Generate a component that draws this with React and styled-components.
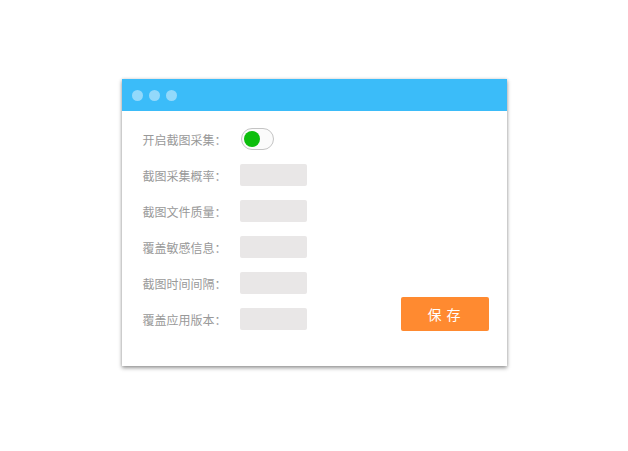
import React, { useState } from "react";
import styled, { createGlobalStyle } from "styled-components";

const GlobalStyle = createGlobalStyle`
  body {
    margin: 0;
    background: #fff;
    font-family: "Noto Sans CJK SC", "Noto Sans", sans-serif;
  }
`;

const Page = styled.div`
  padding: 79px 0 20px;
  display: flex;
  justify-content: center;
`;

const Window = styled.div`
  width: 385px;
  background: #fff;
  box-shadow: 0 2px 4px rgba(0, 0, 0, 0.4), 0 0 3px rgba(0, 0, 0, 0.12);
`;

const TitleBar = styled.div`
  height: 32px;
  background: #3bbcf9;
  display: flex;
  align-items: center;
  gap: 6px;
  padding-left: 10px;
`;

const Dot = styled.span`
  width: 11px;
  height: 11px;
  border-radius: 50%;
  background: #93d9fb;
`;

const Body = styled.div`
  display: flex;
  justify-content: space-between;
  align-items: flex-end;
  padding: 17px 18px 36px 21px;
`;

const Form = styled.div`
  display: flex;
  flex-direction: column;
  gap: 14px;
`;

const Row = styled.div`
  display: flex;
  align-items: center;
  height: 22px;
`;

const Label = styled.span`
  width: 97px;
  font-size: 12px;
  color: #999;
`;

const Field = styled.div`
  width: 67px;
  height: 22px;
  background: #e9e7e7;
  border-radius: 2px;
`;

const Toggle = styled.button`
  width: 33px;
  height: 22px;
  margin-left: 1px;
  padding: 0 2px;
  border: 1px solid #c4c4c4;
  border-radius: 11px;
  background: #fbfbfb;
  display: flex;
  align-items: center;
  justify-content: ${(p) => (p.$on ? "flex-start" : "flex-end")};
  cursor: pointer;
  &::after {
    content: "";
    width: 16px;
    height: 16px;
    border-radius: 50%;
    background: ${(p) => (p.$on ? "#0cbe0c" : "#ccc")};
  }
`;

const SaveButton = styled.button`
  width: 88px;
  height: 34px;
  margin-bottom: -1px;
  border: none;
  border-radius: 2px;
  background: #ff8a30;
  color: #fff;
  font-family: inherit;
  font-size: 14px;
  letter-spacing: 1px;
  cursor: pointer;
`;

const fields = ["截图采集概率", "截图文件质量", "覆盖敏感信息", "截图时间间隔", "覆盖应用版本"];

export default function App() {
  const [enabled, setEnabled] = useState(true);
  return (
    <>
      <GlobalStyle />
      <Page>
        <Window>
          <TitleBar>
            <Dot />
            <Dot />
            <Dot />
          </TitleBar>
          <Body>
            <Form>
              <Row>
                <Label>开启截图采集：</Label>
                <Toggle $on={enabled} onClick={() => setEnabled(!enabled)} />
              </Row>
              {fields.map((name) => (
                <Row key={name}>
                  <Label>{name}：</Label>
                  <Field />
                </Row>
              ))}
            </Form>
            <SaveButton>保 存</SaveButton>
          </Body>
        </Window>
      </Page>
    </>
  );
}
